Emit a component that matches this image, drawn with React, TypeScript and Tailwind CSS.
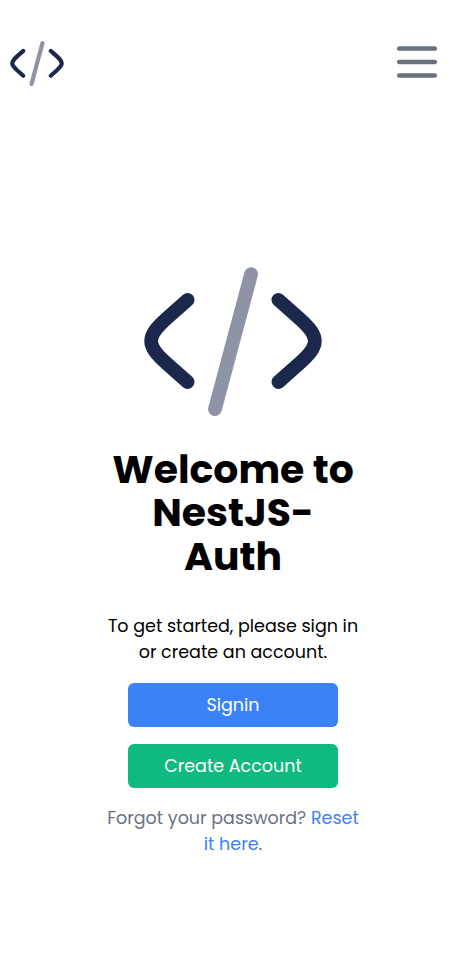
import React from "react";

function Logo({ className }: { className: string }) {
  return (
    <svg viewBox="144 267 178 149" fill="none" strokeWidth="13.8" strokeLinecap="round" className={className}>
      <path stroke="#1c274c" d="M187.6 299.9L167 318.1C145.9 336.8 145.9 345.4 167 363.7L187.6 382" />
      <path stroke="#1c274c" d="M278.4 299.9L299 318.1C320.1 336.8 320.1 345.4 299 363.7L278.4 382" />
      <path stroke="#8e93a6" d="M251.1 274.1L215 409" />
    </svg>
  );
}

export default function App() {
  return (
    <div className="flex h-[962px] w-full flex-col overflow-hidden bg-white font-[Poppins,Inter,sans-serif] text-black">
      <header className="flex h-[85px] items-start justify-between pt-10 pr-7 pl-[10px]">
        <Logo className="mt-[0.5px] h-[45px] w-[54px]" />
        <button aria-label="Open menu" className="mt-[5px] text-gray-500">
          <svg viewBox="0 0 40 34" className="h-[34px] w-10" fill="none" stroke="currentColor" strokeWidth="4.5" strokeLinecap="round">
            <path d="M2.2 3.6H37.8M2.2 17H37.8M2.2 30.4H37.8" />
          </svg>
        </button>
      </header>
      <main className="mt-[182px] flex flex-col items-center pl-px">
        <Logo className="h-[149px] w-[178px]" />
        <h1 className="mt-[31.5px] flex flex-col items-center text-[39.375px] leading-[43.75px] font-bold whitespace-nowrap">
          <span>Welcome to</span>
          <span>NestJS-</span>
          <span>Auth</span>
        </h1>
        <p className="mt-[34.25px] flex flex-col items-center text-[17.5px] leading-[26.25px] whitespace-nowrap">
          <span>To get started, please sign in</span>
          <span>or create an account.</span>
        </p>
        <button className="mt-[17px] h-11 w-[210px] rounded-md bg-[#3b82f6] pt-0.5 text-[17.5px] text-white">Signin</button>
        <button className="mt-[17px] h-11 w-[210px] rounded-md bg-[#10b981] pt-0.5 text-[17.5px] text-white">Create Account</button>
        <p className="mt-[17px] flex flex-col items-center text-[17.5px] leading-[26px] whitespace-nowrap text-gray-500">
          <span>Forgot your password? <a className="text-[#3b82f6]">Reset</a></span>
          <span><a className="text-[#3b82f6]">it here</a>.</span>
        </p>
      </main>
    </div>
  );
}
